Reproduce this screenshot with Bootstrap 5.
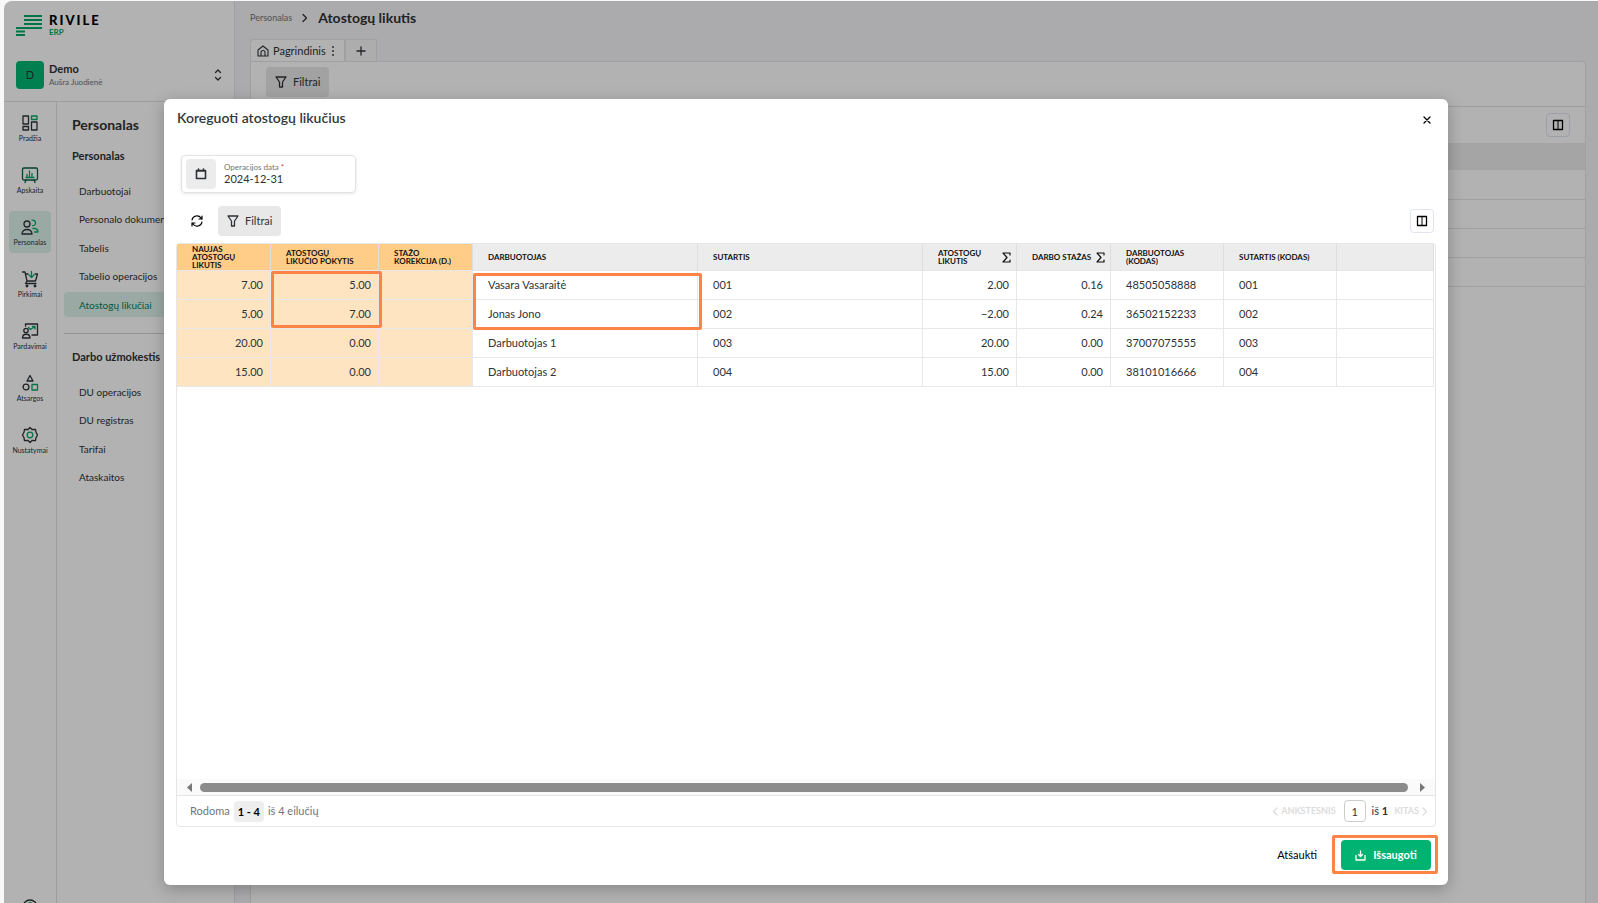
<!DOCTYPE html>
<html lang="lt">
<head>
<meta charset="utf-8">
<meta name="viewport" content="width=device-width, initial-scale=1">
<title>Atostogų likutis</title>
<link href="https://cdn.jsdelivr.net/npm/bootstrap@5.3.0/dist/css/bootstrap.min.css" rel="stylesheet">
<style>
  body { font-family: Lato, "Open Sans", sans-serif; font-size: 11px; line-height: 14px; color: #2e3236; background: #f8f8f8; padding: 1px 0 0 4px; }
  svg { display: block; flex: none; fill: none; stroke: currentColor; stroke-width: 1.3; stroke-linecap: round; stroke-linejoin: round; }
  a { color: inherit; text-decoration: none; }
  button, input { font: inherit; color: inherit; }
  .g { stroke: #00a868; }
  .shell { height: calc(100vh - 1px); border-top-left-radius: 8px; background: #f5f5f8; }
  .sidebar { width: 231px; background: #fff; border-right: 1px solid #e2e2e6; }
  .side-top { height: 101px; padding: 12px 11px 0 12px; border-bottom: 1px solid #e2e2e2; }
  .brand { height: 24px; font-size: 13px; line-height: 14px; font-weight: 900; letter-spacing: 2px; color: #000; gap: 6px; }
  .brand svg { stroke: #00a868; stroke-width: 2; stroke-linecap: butt; }
  .brand small { font-size: 8px; line-height: 11px; font-weight: 700; letter-spacing: 0; color: #00a868; }
  .account { margin-top: 24px; gap: 5px; }
  .avatar { width: 28px; height: 28px; border-radius: 4px; background: #00b874; }
  .tiny { font-size: 9px; line-height: 12px; }
  .account .tiny { font-size: 8px; }
  .soft { color: #70757a; }
  .rail { width: 53px; padding-top: 5px; border-right: 1px solid #e2e2e2; gap: 10px; }
  .rail a { width: 42px; height: 42px; border-radius: 4px; font-size: 7px; line-height: 9px; gap: 2px; padding-top: 7px; }
  .rail .help { margin-bottom: -30px; }
  .rail .current, .side-list .current { background: #dff3ec; }
  .side-nav { padding: 14px 0 0 7px; }
  .side-nav h2 { font-size: 14px; line-height: 18px; font-weight: 700; margin: 0 0 15px 8px; }
  .side-nav h3 { font-size: 11px; line-height: 14px; font-weight: 700; margin: 0 0 15px 8px; }
  .side-list { font-size: 10px; height: 139px; }
  .side-list.four { height: 111px; }
  .side-list a { display: flex; align-items: center; height: 25px; padding-left: 15px; border-radius: 4px 0 0 4px; white-space: nowrap; }
  .side-list .current { color: #00805a; }
  .side-nav hr { margin: 16px 0; border-color: #b8b8b8; opacity: .6; }
  .workspace { padding: 8px 12px 0 15px; }
  .crumbs { gap: 9px; }
  .crumbs h1 { font-size: 14px; line-height: 18px; font-weight: 700; }
  .view-tabs { margin-top: 12px; }
  .view-tabs button { height: 22px; border: 1px solid #e6e6ea; border-bottom: 0; background: #f8f8fa; }
  .view-tabs .current { background: #fff; border-radius: 4px 0 0 0; padding: 0 8px 0 6px; gap: 4px; }
  .panel { background: #fff; border: 1px solid #e6e6ea; border-bottom: 0; border-radius: 0 4px 0 0; }
  .panel-bar { height: 45px; padding: 0 15px; border-bottom: 1px solid #e2e2e2; }
  .panel-tools { height: 36px; padding: 0 15px; }
  .panel td { height: 29px; border-bottom: 1px solid #e6e6e6; padding: 0; }
  .panel th { height: 27px; background: #ececec; padding: 0; }
  .btn-filter { height: 30px; padding: 0 9px; gap: 6px; border-radius: 4px; border: 0; background: #e8e8e8; }
  .btn-square { width: 24px; height: 24px; border: 1px solid #dfe4ee; border-radius: 4px; background: transparent; color: #000; }
  .veil { background: rgba(0,0,0,.3); padding: 98px 150px 18px 160px; }
  .dialog { background: #fff; border-radius: 6px; padding: 10px 12px 11px; box-shadow: 0 4px 16px rgba(0,0,0,.25); }
  .dialog h2 { font-size: 14px; line-height: 18px; font-weight: 600; color: #33373a; margin: 0 0 0 1px; }
  .btn-close-x { margin: 5px 4px 0 0; }
  .date-field { width: 175px; height: 38px; border: 1px solid #e2e2e2; border-radius: 4px; padding: 3px 4px; margin: 28px 0 0 5px; gap: 8px; box-shadow: 0 1px 3px rgba(0,0,0,.1); }
  .date-icon { width: 30px; height: 30px; border: 0; border-radius: 4px; background: #ececec; }
  .date-field label { font-size: 8px; line-height: 10px; }
  .date-field input { border: 0; padding: 0; width: 100%; height: 14px; line-height: 14px; background: transparent; }
  .tools { margin: 13px 2px 7px 0; padding-left: 15px; gap: 15px; }
  .grid-box { border: 1px solid #e6e6e6; border-radius: 4px; }
  .data { table-layout: fixed; width: calc(100% - 1px); border-collapse: separate; border-spacing: 0; }
  .data th { height: 27px; padding: 0 5px 0 15px; background: #ececec; border-right: 1px solid #dedede; border-bottom: 1px solid #e6e6e6; font-size: 8px; line-height: 8px; font-weight: 700; vertical-align: middle; color: #111; }
  .data td { height: 29px; padding: 0 7px 0 15px; border-right: 1px solid #e8e8e8; border-bottom: 1px solid #e8e8e8; position: relative; }
  .data .num { text-align: right; }
  .data th.warm { background: #ffcd87; }
  .data td.warm { background: #ffe4c1; }
  .c-sm { width: 94px; } .c-md { width: 108px; } .c-lg { width: 225px; } .c-code { width: 113px; }
  .frame { position: absolute; z-index: 2; border: 3px solid #ff8345; border-radius: 2px; pointer-events: none; }
  .frame-change { top: 0; left: 0; right: -4px; height: 57px; }
  .frame-name { top: 2px; left: 0; right: -5px; height: 57px; }
  .scroller { height: 17px; padding: 0 10px; gap: 8px; background: #fafafa; border-bottom: 1px solid #e6e6e6; }
  .arrow { fill: #777; stroke: none; }
  .thumb { height: 9px; border-radius: 5px; background: #8b8b8b; }
  .pager { height: 30px; padding: 0 7px 0 13px; }
  .range { height: 21px; padding: 0 4px; border-radius: 4px; background: #eee; color: #000; line-height: 21px; }
  .page-no { width: 22px; height: 22px; border: 1px solid #ccc; border-radius: 4px; padding: 0; text-align: center; }
  .page-sum { margin: 0 6px; }
  .faded { color: #dcdcdc; border: 0; background: none; padding: 0; gap: 3px; font-size: 9px; font-weight: 700; }
  .actions { margin-top: 8px; gap: 15px; }
  .save-frame { border: 3px solid #ff8345; border-radius: 2px; padding: 2px 4px 1px 6px; margin-right: -2px; }
  .btn-save { width: 90px; height: 30px; border: 0; border-radius: 4px; background: #00b373; color: #fff; font-weight: 700; gap: 7px; }
  .btn-plain { border: 0; background: none; padding: 0; color: #000; }
</style>
</head>
<body class="overflow-hidden">
<div class="shell d-flex position-relative overflow-hidden">

  <aside class="sidebar d-flex flex-column flex-shrink-0">
    <div class="side-top">
      <div class="brand d-flex">
        <svg width="27" height="24" viewBox="0 0 27 24"><path d="M8 3h18M8 7h18M8 11h18M0 15h26M0 18.500h9M0 22h9"/></svg>
        <div class="d-flex flex-column">RIVILE<small>ERP</small></div>
      </div>
      <div class="account d-flex align-items-center">
        <div class="avatar d-flex align-items-center justify-content-center">D</div>
        <div class="flex-grow-1"><div class="fw-bold">Demo</div><div class="tiny soft">Aušra Juodienė</div></div>
        <svg width="10" height="12" viewBox="0 0 10 12"><path d="M2.500 3.500L5 1l2.500 2.500M2.500 8.500L5 11l2.500-2.500"/></svg>
      </div>
    </div>
    <div class="d-flex flex-grow-1 overflow-hidden">
      <nav class="rail d-flex flex-column align-items-center flex-shrink-0" aria-label="Moduliai">
        <a href="#" class="d-flex flex-column align-items-center"><svg width="18" height="18" viewBox="0 0 18 18"><path d="M2 2h5.500v8H2zM2 12.500h5.500V16H2zM10.500 8H16v8h-5.500z"/><path class="g" d="M10.500 2H16v3.500h-5.500z"/></svg>Pradžia</a>
        <a href="#" class="d-flex flex-column align-items-center"><svg width="18" height="18" viewBox="0 0 18 18"><rect x="1.500" y="2" width="15" height="12" rx="1.500" stroke="#0b5c43"/><path d="M5 14l-1 2.500M13 14l1 2.500" stroke="#0b5c43"/><path class="g" d="M6 11V8.500M8.500 11V5M11 11V7.500M5 11.500h8"/></svg>Apskaita</a>
        <a href="#" class="current d-flex flex-column align-items-center"><svg width="18" height="18" viewBox="0 0 18 18"><circle cx="6" cy="6" r="3"/><path d="M1 16c0-6 10-6 10 0z"/><path class="g" d="M11 2.200a2.800 2.800 0 1 1 .5 5.500M12 10.500c3-.5 5 1 5 3.500h-3.500"/></svg>Personalas</a>
        <a href="#" class="d-flex flex-column align-items-center"><svg width="18" height="18" viewBox="0 0 18 18"><path d="M1.500 2H4l2 9h8.500l2-7H14M4.500 4H7M6 11l-1.500 2.500H15"/><circle cx="6" cy="16" r=".8"/><circle cx="14" cy="16" r=".8"/><path class="g" d="M10.500 1.500V7M8 5l2.500 2.500L13 5"/></svg>Pirkimai</a>
        <a href="#" class="d-flex flex-column align-items-center"><svg width="18" height="18" viewBox="0 0 18 18"><path d="M4.500 4V2h12v11H11"/><circle cx="5" cy="8.500" r="2.200"/><path d="M1.500 16c0-5 7.500-5 7.500 0z"/><path class="g" d="M7.500 5.500l2 2 1.500-1 3-2M11.500 4.500H14V7"/></svg>Pardavimai</a>
        <a href="#" class="d-flex flex-column align-items-center"><svg width="18" height="18" viewBox="0 0 18 18"><path d="M9 1.500L12 7H6z"/><circle cx="5" cy="13" r="2.900"/><path class="g" d="M11 10.500h5.500V16H11z"/></svg>Atsargos</a>
        <a href="#" class="d-flex flex-column align-items-center"><svg width="18" height="18" viewBox="0 0 18 18"><path d="M9 1.500l2 2 3.500-.2.500 3L16.500 9 15 11.700l-.5 3-3.500-.2-2 2-2-2-3.500.2-.5-3L1.500 9 3 6.300l.5-3 3.500.2z"/><circle class="g" cx="9" cy="9" r="2.800"/></svg>Nustatymai</a>
        <a href="#" aria-label="Pagalba" class="help d-flex flex-column align-items-center mt-auto flex-shrink-0"><svg width="18" height="18" viewBox="0 0 18 18"><circle cx="9" cy="9" r="7"/><path class="g" d="M7 7c0-3 4-3 4-.5 0 1.500-2 1.500-2 3M9 12v.5"/></svg></a>
      </nav>
      <nav class="side-nav flex-grow-1" aria-label="Personalas">
        <h2>Personalas</h2>
        <h3>Personalas</h3>
        <ul class="side-list list-unstyled d-flex flex-column justify-content-between mb-0">
          <li><a href="#">Darbuotojai</a></li><li><a href="#">Personalo dokumentai</a></li><li><a href="#">Tabelis</a></li><li><a href="#">Tabelio operacijos</a></li><li><a href="#" class="current">Atostogų likučiai</a></li>
        </ul>
        <hr>
        <h3>Darbo užmokestis</h3>
        <ul class="side-list four list-unstyled d-flex flex-column justify-content-between mb-0">
          <li><a href="#">DU operacijos</a></li><li><a href="#">DU registras</a></li><li><a href="#">Tarifai</a></li><li><a href="#">Ataskaitos</a></li>
        </ul>
      </nav>
    </div>
  </aside>

  <main class="workspace d-flex flex-column flex-grow-1">
    <div class="crumbs d-flex align-items-center">
      <a href="#" class="tiny soft">Personalas</a>
      <svg width="8" height="10" viewBox="0 0 8 10"><path d="M2 1.500L5.500 5 2 8.500"/></svg>
      <h1 class="mb-0">Atostogų likutis</h1>
    </div>
    <div class="view-tabs d-flex">
      <button type="button" class="current d-flex align-items-center"><svg width="12" height="12" viewBox="0 0 12 12"><path d="M1 5l5-4 5 4v6H1zM4 11V7.500a2 2 0 0 1 4 0V11" stroke-width="1.100"/></svg>Pagrindinis<svg width="6" height="12" viewBox="0 0 6 12"><path d="M3 2v.1M3 6v.1M3 10v.1" stroke-width="1.800"/></svg></button>
      <button type="button" class="px-2 d-flex align-items-center" aria-label="Pridėti"><svg width="14" height="12" viewBox="0 0 14 12"><path d="M7 2v8M3 6h8"/></svg></button>
    </div>
    <section class="panel flex-grow-1">
      <div class="panel-bar d-flex align-items-center"><button type="button" class="btn-filter d-flex align-items-center mb-1"><svg width="12" height="12" viewBox="0 0 12 12"><path d="M1 1h10L7.500 6v5h-3V6z"/></svg>Filtrai</button></div>
      <div class="panel-tools d-flex align-items-center justify-content-end"><button type="button" class="btn-square d-flex align-items-center justify-content-center p-0" aria-label="Stulpeliai"><svg width="12" height="12" viewBox="0 0 12 12"><path d="M1.500 1.500h9v9h-9z"/><path d="M6 2v8" stroke-width="1"/></svg></button></div>
      <table class="w-100"><thead><tr><th></th></tr></thead><tbody><tr><td></td></tr><tr><td></td></tr><tr><td></td></tr><tr><td></td></tr></tbody></table>
    </section>
  </main>

  <div class="veil position-absolute top-0 bottom-0 start-0 end-0 d-flex">
    <div class="dialog d-flex flex-column flex-grow-1" role="dialog" aria-labelledby="dlg-title">
      <div class="d-flex justify-content-between align-items-start">
        <h2 id="dlg-title">Koreguoti atostogų likučius</h2>
        <button type="button" class="btn-plain btn-close-x" aria-label="Uždaryti"><svg width="10" height="12" viewBox="0 0 10 12"><path d="M2 3l6 6M8 3l-6 6"/></svg></button>
      </div>
      <div class="date-field d-flex align-items-center">
        <button type="button" class="date-icon d-flex align-items-center justify-content-center flex-shrink-0" aria-label="Kalendorius"><svg width="12" height="12" viewBox="0 0 12 12"><path d="M1.500 2.500h9v8h-9zM3.500 1v1M8.500 1v1M2 3h8" stroke-width="1.600"/></svg></button>
        <div><label class="d-block soft" for="op-date">Operacijos data <span class="text-danger">*</span></label><input id="op-date" type="text" value="2024-12-31"></div>
      </div>
      <div class="tools d-flex align-items-center">
        <button type="button" class="btn-plain" aria-label="Atnaujinti"><svg width="12" height="12" viewBox="0 0 12 12"><path d="M1 5a5 5 0 0 1 9-2l1 1M11 1v3H8M11 7a5 5 0 0 1-9 2L1 8M1 11V8h3" stroke-width="1.200"/></svg></button>
        <button type="button" class="btn-filter d-flex align-items-center"><svg width="12" height="12" viewBox="0 0 12 12"><path d="M1 1h10L7.500 6v5h-3V6z"/></svg>Filtrai</button>
        <button type="button" class="btn-square d-flex align-items-center justify-content-center p-0 ms-auto" aria-label="Stulpeliai"><svg width="12" height="12" viewBox="0 0 12 12"><path d="M1.500 1.500h9v9h-9z"/><path d="M6 2v8" stroke-width="1"/></svg></button>
      </div>
      <div class="grid-box d-flex flex-column flex-grow-1">
        <table class="data">
          <colgroup><col class="c-sm"><col class="c-md"><col class="c-sm"><col class="c-lg"><col class="c-lg"><col class="c-sm"><col class="c-sm"><col class="c-code"><col class="c-code"><col></colgroup>
          <thead><tr>
            <th class="warm">NAUJAS<br>ATOSTOGŲ<br>LIKUTIS</th><th class="warm">ATOSTOGŲ<br>LIKUČIO POKYTIS</th><th class="warm">STAŽO<br>KOREKCIJA (D.)</th><th>DARBUOTOJAS</th><th>SUTARTIS</th>
            <th><div class="d-flex align-items-center justify-content-between"><span>ATOSTOGŲ<br>LIKUTIS</span><svg width="9" height="11" viewBox="0 0 9 11"><path d="M8 3V1H1l4 4.500L1 10h7V8" stroke-width="1.200"/></svg></div></th>
            <th><div class="d-flex align-items-center justify-content-between"><span class="text-nowrap">DARBO STAŽAS</span><svg width="9" height="11" viewBox="0 0 9 11"><path d="M8 3V1H1l4 4.500L1 10h7V8" stroke-width="1.200"/></svg></div></th>
            <th>DARBUOTOJAS<br>(KODAS)</th><th>SUTARTIS (KODAS)</th><th></th>
          </tr></thead>
          <tbody>
            <tr><td class="warm num">7.00</td><td class="warm num">5.00<span class="frame frame-change"></span></td><td class="warm"></td><td>Vasara Vasaraitė<span class="frame frame-name"></span></td><td>001</td><td class="num">2.00</td><td class="num">0.16</td><td>48505058888</td><td>001</td><td></td></tr>
            <tr><td class="warm num">5.00</td><td class="warm num">7.00</td><td class="warm"></td><td>Jonas Jono</td><td>002</td><td class="num">−2.00</td><td class="num">0.24</td><td>36502152233</td><td>002</td><td></td></tr>
            <tr><td class="warm num">20.00</td><td class="warm num">0.00</td><td class="warm"></td><td>Darbuotojas 1</td><td>003</td><td class="num">20.00</td><td class="num">0.00</td><td>37007075555</td><td>003</td><td></td></tr>
            <tr><td class="warm num">15.00</td><td class="warm num">0.00</td><td class="warm"></td><td>Darbuotojas 2</td><td>004</td><td class="num">15.00</td><td class="num">0.00</td><td>38101016666</td><td>004</td><td></td></tr>
          </tbody>
        </table>
        <div class="scroller d-flex align-items-center mt-auto">
          <svg class="arrow" width="5" height="9" viewBox="0 0 5 9"><path d="M5 0v9L0 4.500z"/></svg>
          <div class="thumb flex-grow-1"></div>
          <svg class="arrow ms-1" width="5" height="9" viewBox="0 0 5 9"><path d="M0 0v9l5-4.500z"/></svg>
        </div>
        <div class="pager d-flex align-items-center">
          <span class="soft">Rodoma</span><strong class="range mx-1">1 - 4</strong><span class="soft">iš 4 eilučių</span>
          <button type="button" class="faded d-flex align-items-center ms-auto me-2" disabled><svg width="6" height="9" viewBox="0 0 6 9"><path d="M5 1L1.500 4.500 5 8"/></svg>ANKSTESNIS</button>
          <input class="page-no" type="text" value="1" aria-label="Puslapis">
          <span class="page-sum">iš <strong>1</strong></span>
          <button type="button" class="faded d-flex align-items-center" disabled>KITAS<svg width="6" height="9" viewBox="0 0 6 9"><path d="M1 1l3.500 3.500L1 8"/></svg></button>
        </div>
      </div>
      <div class="actions d-flex justify-content-end align-items-center">
        <button type="button" class="btn-plain">Atšaukti</button>
        <div class="save-frame"><button type="submit" class="btn-save d-flex align-items-center justify-content-center"><svg width="11" height="11" viewBox="0 0 11 11"><path d="M5.500 1v5M3.500 4.500l2 2 2-2M1 5.500V10h9V5.500"/></svg>Išsaugoti</button></div>
      </div>
    </div>
  </div>
</div>
<script src="https://cdn.jsdelivr.net/npm/bootstrap@5.3.0/dist/js/bootstrap.bundle.min.js"></script>
</body>
</html>
